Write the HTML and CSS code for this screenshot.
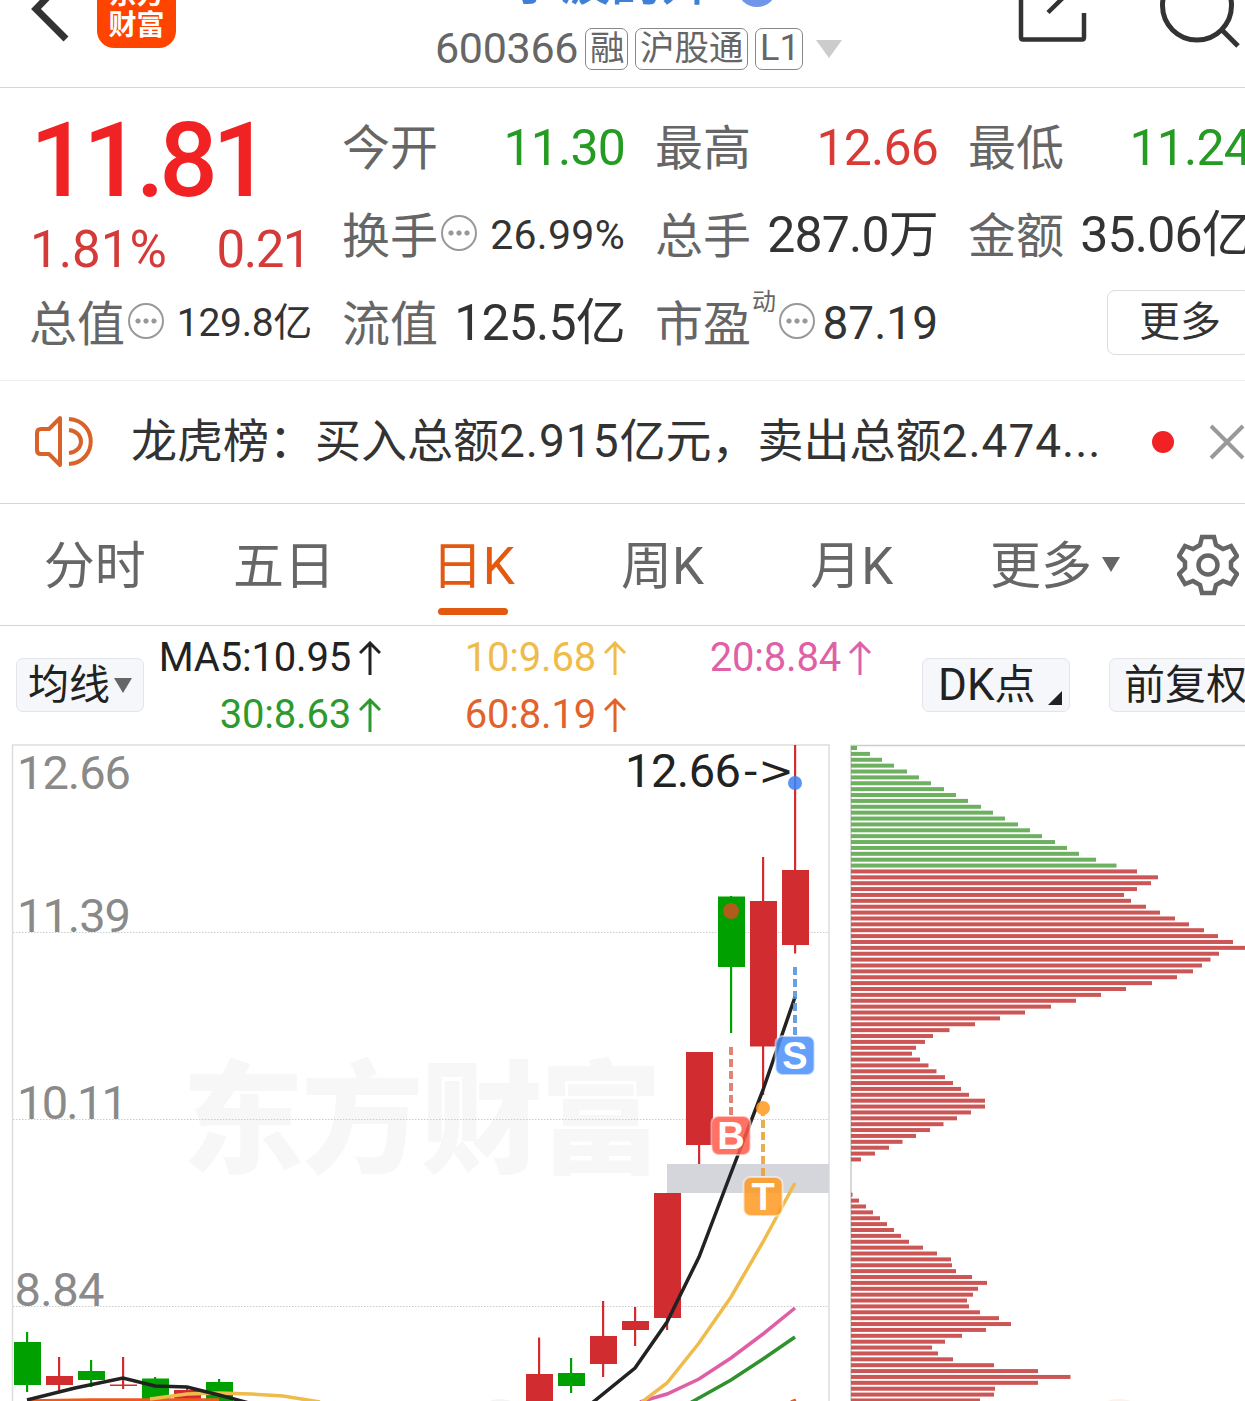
FILE: index.html
```html
<!DOCTYPE html>
<html lang="zh-CN">
  <head>
    <meta charset="UTF-8" />
    <meta name="viewport" content="width=device-width, initial-scale=1.0" />
    <title>宁波韵升 600366</title>
    <link rel="stylesheet" href="styles.css">
  </head>
  <body>
    <header class="header">
      <div class="header-left">
        <svg class="back" width="50" height="88" viewBox="0 0 50 88">
          <path d="M46 -22 L16 9 L46 39" />
        </svg>
        <div class="logo"><span>东方</span><span>财富</span></div>
      </div>
      <div class="stock">
        <div class="stock-name">宁波韵升<i class="badge"></i></div>
        <div class="stock-code">
          <span class="code">600366</span>
          <span class="tag">融</span>
          <span class="tag">沪股通</span>
          <span class="tag tag-l1">L1</span>
          <svg class="drop" width="26" height="18" viewBox="0 0 26 18"><path d="M0 0H26L13 18Z" /></svg>
        </div>
      </div>
      <svg class="header-icons" width="235" height="88" viewBox="0 0 235 88">
        <path class="share" d="M11 -5V37.500Q11 39.500 13 39.500H72Q74 39.500 74 37.500V13M74 0V-8M38 12.500L64 -13" />
        <circle cx="187" cy="5.500" r="34.500" />
        <path d="M211 29L228 46" />
      </svg>
    </header>

    <section class="quote">
      <div class="price">
        <div class="price-now">11.81</div>
        <div class="price-diff"><span>1.81%</span><span>0.21</span></div>
      </div>
      <div class="item"><span class="label">今开</span><span class="value green">11.30</span></div>
      <div class="item"><span class="label">最高</span><span class="value red">12.66</span></div>
      <div class="item"><span class="label">最低</span><span class="value green">11.24</span></div>
      <div class="item"><span class="label">换手</span><i class="tip"></i><span class="value small">26.99%</span></div>
      <div class="item"><span class="label">总手</span><span class="value">287.0万</span></div>
      <div class="item"><span class="label">金额</span><span class="value">35.06亿</span></div>
      <div class="item"><span class="label">总值</span><i class="tip"></i><span class="value smaller">129.8亿</span></div>
      <div class="item"><span class="label">流值</span><span class="value">125.5亿</span></div>
      <div class="item"><span class="label">市盈</span><sup class="dong">动</sup><i class="tip"></i><span class="value mid">87.19</span></div>
      <div class="item"><a class="more" href="#">更多</a></div>
    </section>

    <section class="news">
      <svg class="horn" width="62" height="54" viewBox="0 0 62 54">
        <path d="M28 3V50L17 39H9Q5 39 5 35V18Q5 14 9 14H17Z" />
        <path d="M37 4C66 6 66 47 37 49M37 15C53 17 53 36 37 38" />
      </svg>
      <p class="news-text">龙虎榜：买入总额<span class="num">2.915</span>亿元，卖出总额<span class="num">2.474...</span></p>
      <i class="dot"></i>
      <svg class="close" width="36" height="36" viewBox="0 0 36 36"><path d="M2 2L34 34M34 2L2 34" /></svg>
    </section>

    <nav class="tabs">
      <a href="#">分时</a>
      <a href="#">五日</a>
      <a class="active" href="#">日K</a>
      <a href="#">周K</a>
      <a href="#">月K</a>
      <a class="tab-more" href="#">更多<svg width="18" height="15" viewBox="0 0 18 15"><path d="M0 0H18L9 15Z" /></svg></a>
      <svg class="gear" width="62" height="62" viewBox="0 0 62 62">
        <path d="M25 3H37L39 11L46 15L54 12L60 22L54 28V34L60 40L54 50L46 47L39 51L37 59H25L23 51L16 47L8 50L2 40L8 34V28L2 22L8 12L16 15L23 11Z" />
        <circle cx="31" cy="31" r="9.500" />
      </svg>
    </nav>

    <section class="toolbar">
      <a class="btn btn-ma" href="#">均线<svg width="18" height="15" viewBox="0 0 18 15"><path d="M0 0H18L9 15Z" /></svg></a>
      <div class="legend">
        <span class="ma5">MA5:10.95<svg class="up" viewBox="0 0 22 34"><path d="M11 34V2M1 12L11 2L21 12" /></svg></span>
        <span class="ma10">10:9.68<svg class="up" viewBox="0 0 22 34"><path d="M11 34V2M1 12L11 2L21 12" /></svg></span>
        <span class="ma20">20:8.84<svg class="up" viewBox="0 0 22 34"><path d="M11 34V2M1 12L11 2L21 12" /></svg></span>
        <span class="ma30">30:8.63<svg class="up" viewBox="0 0 22 34"><path d="M11 34V2M1 12L11 2L21 12" /></svg></span>
        <span class="ma60">60:8.19<svg class="up" viewBox="0 0 22 34"><path d="M11 34V2M1 12L11 2L21 12" /></svg></span>
      </div>
      <a class="btn btn-dk" href="#"><span class="dk">DK</span>点<svg width="14" height="14" viewBox="0 0 14 14"><path d="M14 0V14H0Z" /></svg></a>
      <a class="btn btn-fq" href="#">前复权</a>
    </section>

    <main class="charts">
      <svg class="kline" width="842" height="657" viewBox="0 744 842 657">
        <text class="watermark" x="182" y="1163" textLength="480">东方财富</text>
        <path class="frame" d="M12.500 1401V745H829V1401" />
        <path class="grid" d="M13 932.500H829M13 1119.500H829M13 1306.500H829" />
        <rect class="gap" x="667" y="1164" width="162" height="29" />
        <g id="candles"></g>
        <g class="lines">
          <path class="line60" d="M27 1401L91 1400L155 1400L219 1400M791 1402L796 1400" />
          <path class="line30" d="M690 1403L731 1380L763 1359L795 1337" />
          <path class="line20" d="M640 1402L667 1394L699 1379L731 1358L763 1334L795 1308" />
          <path class="line10" d="M150 1399L187 1394L219 1393L251 1394L283 1396L320 1402M642 1402L667 1383L699 1343L731 1297L763 1242L795 1183" />
          <path class="line5" d="M27 1400L75 1388L123 1378L155 1386L187 1387L219 1395L249 1403M592 1403L635 1368L667 1322L699 1257L731 1173L763 1090L795 997" />
        </g>
        <g class="axis">
          <text x="17" y="788.500" textLength="114">12.66</text>
          <text x="17" y="931.500" textLength="114">11.39</text>
          <text x="17" y="1119" textLength="111">10.11</text>
          <text x="14.500" y="1306" textLength="90">8.84</text>
        </g>
        <text class="peak" x="625" y="786.500" textLength="116">12.66</text>
        <text class="peak peak-arrow" x="743" y="785" textLength="51" lengthAdjust="spacingAndGlyphs">-&gt;</text>
        <g class="marks">
          <path class="dash-s" d="M795 967V1035" />
          <path class="dash-b" d="M731 1047V1115" />
          <path class="dash-t" d="M763 1108V1176" />
          <circle cx="795" cy="783" r="7" fill="#3b82f6" />
          <circle cx="731" cy="911" r="8" fill="#d05020" />
          <circle cx="763" cy="1108" r="7" fill="#ff9a1f" />
          <rect x="775.500" y="1036" width="39" height="39" rx="7" fill="#4a90fa" />
          <rect x="711.500" y="1116" width="39" height="39" rx="7" fill="#ff5a4a" />
          <rect x="743.500" y="1177" width="39" height="39" rx="7" fill="#ff9a20" />
        </g>
        <g class="mark-text">
          <text x="795" y="1069">S</text>
          <text x="731" y="1149">B</text>
          <text x="763" y="1210">T</text>
        </g>
        <ellipse cx="500" cy="1406" rx="15" ry="7" fill="#f3f3f3" />
      </svg>
      <svg class="chips" width="403" height="657" viewBox="842 744 403 657">
        <ellipse cx="1119" cy="1406" rx="17" ry="7" fill="#fdf1e8" />
        <path class="chips-frame" d="M851 1401V745.500H1245" />
        <g id="bars"></g>
      </svg>
    </main>
    <script src="script.js"></script>
  </body>
</html>
```

FILE: styles.css
```css
* {
  margin: 0;
  padding: 0;
  box-sizing: border-box;
}
body {
  width: 1245px;
  height: 1401px;
  overflow: hidden;
  background-color: #fff;
  color: #333;
  font-family: Roboto, "Noto Sans CJK SC", sans-serif;
}
a {
  text-decoration: none;
  color: inherit;
}
i {
  font-style: normal;
}
svg {
  display: block;
  flex: none;
}

/* header */
.header {
  display: flex;
  height: 88px;
  overflow: hidden;
  border-bottom: 1px solid #d6d6d6;
}
.header-left {
  display: flex;
  width: 435px;
  padding-left: 20px;
}
.back path {
  fill: none;
  stroke: #333;
  stroke-width: 7;
}
.logo {
  display: flex;
  flex-direction: column;
  justify-content: flex-end;
  align-items: center;
  width: 79px;
  height: 79px;
  margin: -31px 0 0 27px;
  padding-bottom: 7px;
  border-radius: 17px;
  background-color: #ff4400;
  color: #fff;
  font-size: 28px;
  font-weight: 700;
  line-height: 31px;
}
.stock {
  display: flex;
  flex-direction: column;
  justify-content: flex-end;
  width: 407px;
  padding-bottom: 17px;
}
.stock-name {
  display: flex;
  justify-content: center;
  align-items: center;
  flex: none;
  height: 60px;
  margin-bottom: 14px;
  padding-left: 8px;
  color: #3f7fd6;
  font-size: 51px;
  font-weight: 500;
  line-height: 60px;
}
.badge {
  width: 40px;
  height: 40px;
  margin: 7px 0 0 24px;
  border-radius: 50%;
  background-color: #7096ea;
}
.stock-code {
  display: flex;
  flex: none;
  align-items: center;
  height: 43px;
  color: #666;
}
.code {
  width: 143px;
  margin-top: -1px;
  font-size: 43px;
  line-height: 43px;
  letter-spacing: -0.3px;
}
.tag {
  flex: none;
  height: 42px;
  margin-left: 7px;
  padding: 0 4px;
  border: 1px solid #888;
  border-radius: 7px;
  font-size: 34.500px;
  line-height: 38px;
  white-space: nowrap;
}
.tag:nth-child(2) {
  width: 43px;
}
.tag:nth-child(3) {
  width: 113px;
}
.tag-l1 {
  width: 48px;
  font-size: 36px;
}
.drop {
  margin: 0 0 0 13px;
  fill: #ccc;
}
.header-icons {
  margin-left: auto;
  fill: none;
  stroke: #333;
  stroke-width: 5;
}
.share {
  stroke-width: 4.500;
}

/* quote */
.quote {
  display: grid;
  grid-template-columns: repeat(4, 282px);
  grid-template-rows: 87px 88px 88px;
  column-gap: 31px;
  height: 293px;
  padding: 16px 0 0 30px;
  border-bottom: 1px solid #eee;
}
.price {
  grid-row: span 2;
}
.price-now {
  height: 115px;
  color: #f12224;
  font-size: 103px;
  font-weight: 500;
  line-height: 114px;
  letter-spacing: -5.500px;
}
.price-diff {
  display: flex;
  justify-content: space-between;
  padding-right: 2px;
  color: #d43a38;
  font-size: 51px;
  line-height: 61px;
}
.price-diff span:last-child {
  letter-spacing: -1.500px;
}
.item {
  display: flex;
  align-items: center;
  white-space: nowrap;
}
.label {
  margin-left: -1px;
  padding-top: 3px;
  color: #666;
  font-size: 48px;
  line-height: 60px;
}
.value {
  margin-left: auto;
  font-size: 50px;
  line-height: 60px;
  letter-spacing: -0.800px;
}
.value.small {
  font-size: 41px;
  letter-spacing: 0.300px;
}
.value.smaller {
  font-size: 39px;
  letter-spacing: -0.300px;
}
.value.mid {
  font-size: 46px;
  letter-spacing: 0;
}
.green {
  color: #259b24;
}
.red {
  color: #d93a36;
}
.tip {
  flex: none;
  width: 36px;
  height: 36px;
  margin: -4px 0 0 3px;
  padding: 12px 4px;
  border: 2px solid #999;
  border-radius: 50%;
  background-image: radial-gradient(circle, #999 2.200px, transparent 3px);
  background-size: 8px 8px;
  background-repeat: repeat-x;
  background-origin: content-box;
  background-clip: content-box;
}
.dong {
  margin: -42px 0 0 1px;
  color: #666;
  font-size: 24px;
  line-height: 30px;
}
.more {
  width: 160px;
  height: 65px;
  margin: -2px 0 0 138px;
  padding-left: 31px;
  border: 1px solid #ddd;
  border-radius: 8px;
  font-size: 41px;
  line-height: 62px;
}

/* news */
.news {
  display: flex;
  align-items: center;
  height: 123px;
  padding-left: 32px;
  border-bottom: 1px solid #d6d6d6;
}
.horn {
  fill: none;
  stroke: #d9622b;
  stroke-width: 4;
  stroke-linejoin: round;
}
.news-text {
  width: 1003px;
  margin: -10px 0 0 37px;
  font-size: 46px;
  white-space: nowrap;
}
.num {
  letter-spacing: 1px;
}
.dot {
  width: 22px;
  height: 22px;
  margin-left: 19px;
  border-radius: 50%;
  background-color: #f12224;
}
.close {
  margin-left: 35px;
  stroke: #999;
  stroke-width: 4;
}

/* tabs */
.tabs {
  display: flex;
  align-items: center;
  height: 122px;
  border-bottom: 1px solid #d6d6d6;
}
.tabs a {
  display: flex;
  justify-content: center;
  width: 189.300px;
  height: 121px;
  color: #666;
  font-size: 51px;
  line-height: 126px;
}
.tabs a.active {
  flex-direction: column;
  align-items: center;
  justify-content: flex-start;
  color: #e2590f;
}
.tabs a.active::after {
  content: "";
  width: 70px;
  height: 7px;
  margin-top: -22px;
  border-radius: 4px;
  background-color: #e2590f;
}
.tabs .tab-more {
  width: 217px;
}
.tab-more svg {
  margin: 53px 0 0 10px;
  fill: #666;
}
.gear {
  margin-left: 14px;
  fill: none;
  stroke: #666;
  stroke-width: 4.500;
}

/* toolbar */
.toolbar {
  display: flex;
  height: 118px;
  padding-left: 16px;
  color: #222;
}
.btn {
  display: flex;
  flex: none;
  align-items: center;
  height: 54px;
  margin-top: 32px;
  border: 1px solid #e2e4e8;
  border-radius: 7px;
  background-color: #f6f7fa;
  font-size: 41px;
  line-height: 50px;
}
.btn-ma {
  width: 128px;
  padding-left: 11px;
}
.btn-ma svg {
  margin-left: 4px;
  fill: #666;
}
.btn-dk {
  width: 148px;
  margin-left: 51px;
  padding-left: 15px;
}
.dk {
  font-size: 44px;
}
.btn-dk svg {
  margin: 26px 0 0 13px;
  fill: #222;
}
.btn-fq {
  width: 160px;
  margin-left: 39px;
  padding-left: 14px;
}
.legend {
  display: grid;
  grid-template-columns: 237px 245px 245px;
  grid-template-rows: 57px 57px;
  padding-top: 3px;
  font-size: 40px;
  line-height: 57px;
  letter-spacing: -0.200px;
}
.legend span {
  display: flex;
  justify-content: flex-end;
  align-items: center;
}
.up {
  width: 22px;
  height: 34px;
  margin-left: 8px;
  fill: none;
  stroke: currentColor;
  stroke-width: 3;
}
.ma10 {
  color: #efbb4b;
}
.ma20 {
  color: #e060a8;
}
.ma30 {
  color: #2c9a2c;
}
.ma60 {
  color: #e2622b;
}

/* charts */
.charts {
  display: flex;
}
.watermark {
  fill: #f7f7f7;
  font-size: 122px;
  font-weight: 900;
}
.frame {
  fill: none;
  stroke: #ddd;
  stroke-width: 1.500;
}
.grid {
  stroke: #ccc;
  stroke-dasharray: 1.500 1.500;
}
.gap {
  fill: #d5d6db;
}
.lines path {
  fill: none;
  stroke-width: 3.500;
}
.lines .line5 {
  stroke: #222;
}
.lines .line10 {
  stroke: #efbb4b;
}
.lines .line20 {
  stroke: #de5fa6;
}
.lines .line30 {
  stroke: #2f922d;
}
.lines .line60 {
  stroke: #f0591c;
}
.axis {
  fill: #8a8a8a;
  font-size: 47px;
}
.peak {
  fill: #222;
  font-size: 47px;
}
.peak-arrow {
  font-family: "DejaVu Sans", sans-serif;
  font-size: 40px;
}
.marks {
  opacity: 0.85;
}
.marks path {
  stroke-width: 4;
  stroke-dasharray: 8 4;
}
.marks rect {
  stroke: #fff;
  stroke-opacity: 0.6;
  stroke-width: 2;
}
.dash-s {
  stroke: #4f90dc;
}
.dash-b {
  stroke: #d9705f;
}
.dash-t {
  stroke: #e8a030;
}
.mark-text {
  fill: #fff;
  font-family: "Liberation Sans", sans-serif;
  font-size: 38px;
  font-weight: 700;
  text-anchor: middle;
}
.chips-frame {
  fill: none;
  stroke: #ccc;
  stroke-width: 1.500;
}
.up-fill {
  fill: #d12c30;
}
.down-fill {
  fill: #00a000;
}
.bar-green {
  fill: #6cb060;
}
.bar-red {
  fill: #cc5655;
}
```

FILE: script.js
```js
var NS = "http://www.w3.org/2000/svg";

function addRect(parent, x, y, w, h, cls) {
  var r = document.createElementNS(NS, "rect");
  r.setAttribute("x", x);
  r.setAttribute("y", y);
  r.setAttribute("width", w);
  r.setAttribute("height", h);
  r.setAttribute("class", cls);
  parent.appendChild(r);
}

// x, high, body top, body bottom, low, up or down
var candles = [
  [27, 1332, 1342, 1385, 1392, "down"],
  [59, 1357, 1376, 1385, 1392, "up"],
  [91, 1360, 1371, 1380, 1387, "down"],
  [123, 1357, 1384.5, 1386, 1389, "up"],
  [155, 1377, 1378.5, 1410, 1410, "down"],
  [187, 1388, 1390, 1410, 1410, "up"],
  [219, 1379, 1382, 1410, 1410, "down"],
  [539, 1337.5, 1374, 1410, 1410, "up"],
  [571, 1358, 1373, 1386, 1393, "down"],
  [603, 1301, 1336, 1364, 1377, "up"],
  [635, 1307, 1321, 1330, 1346, "up"],
  [667, 1193, 1193, 1318, 1330, "up"],
  [699, 1052, 1052, 1145, 1164, "up"],
  [731, 896, 896.5, 967, 1033, "down"],
  [763, 857, 901, 1046.5, 1095, "up"],
  [795, 745, 870, 945, 953.5, "up"],
];
var candleBox = document.querySelector("#candles");
candles.forEach(function (c) {
  addRect(candleBox, c[0] - 1, c[1], 2.2, c[4] - c[1], c[5] + "-fill");
  addRect(candleBox, c[0] - 13, c[2], 27, c[3] - c[2], c[5] + "-fill");
});

// one bar for each price step, the first 21 are above the current price
var bars = [
  6, 19, 31, 43, 56, 68, 80, 93, 105, 117, 130, 142, 154, 167, 179, 191, 204,
  216, 228, 245, 265.5, 286, 307, 300, 286, 273, 280, 295, 309, 324, 338, 353,
  367, 382, 396, 368, 359.5, 351, 342, 326, 301, 275, 250, 225, 200, 174, 149,
  124, 98.5, 82, 74, 65, 61, 69, 77.5, 85.5, 94, 102, 110, 118, 134, 134, 120,
  106, 92.5, 79, 65, 51.5, 38, 24, 10, 0, 0, 0, 0, 0, 1.5, 8, 15, 22, 29, 36,
  43, 50, 58, 72, 86, 100, 101, 105, 121, 136, 127, 122, 116, 118, 129, 148,
  160, 135, 111, 94, 81, 87, 102, 143, 187, 219.5, 187, 144, 143, 129,
];
var barBox = document.querySelector("#bars");
bars.forEach(function (w, i) {
  addRect(barBox, 851, 746 + i * 5.878, w, 4, i < 21 ? "bar-green" : "bar-red");
});
```
